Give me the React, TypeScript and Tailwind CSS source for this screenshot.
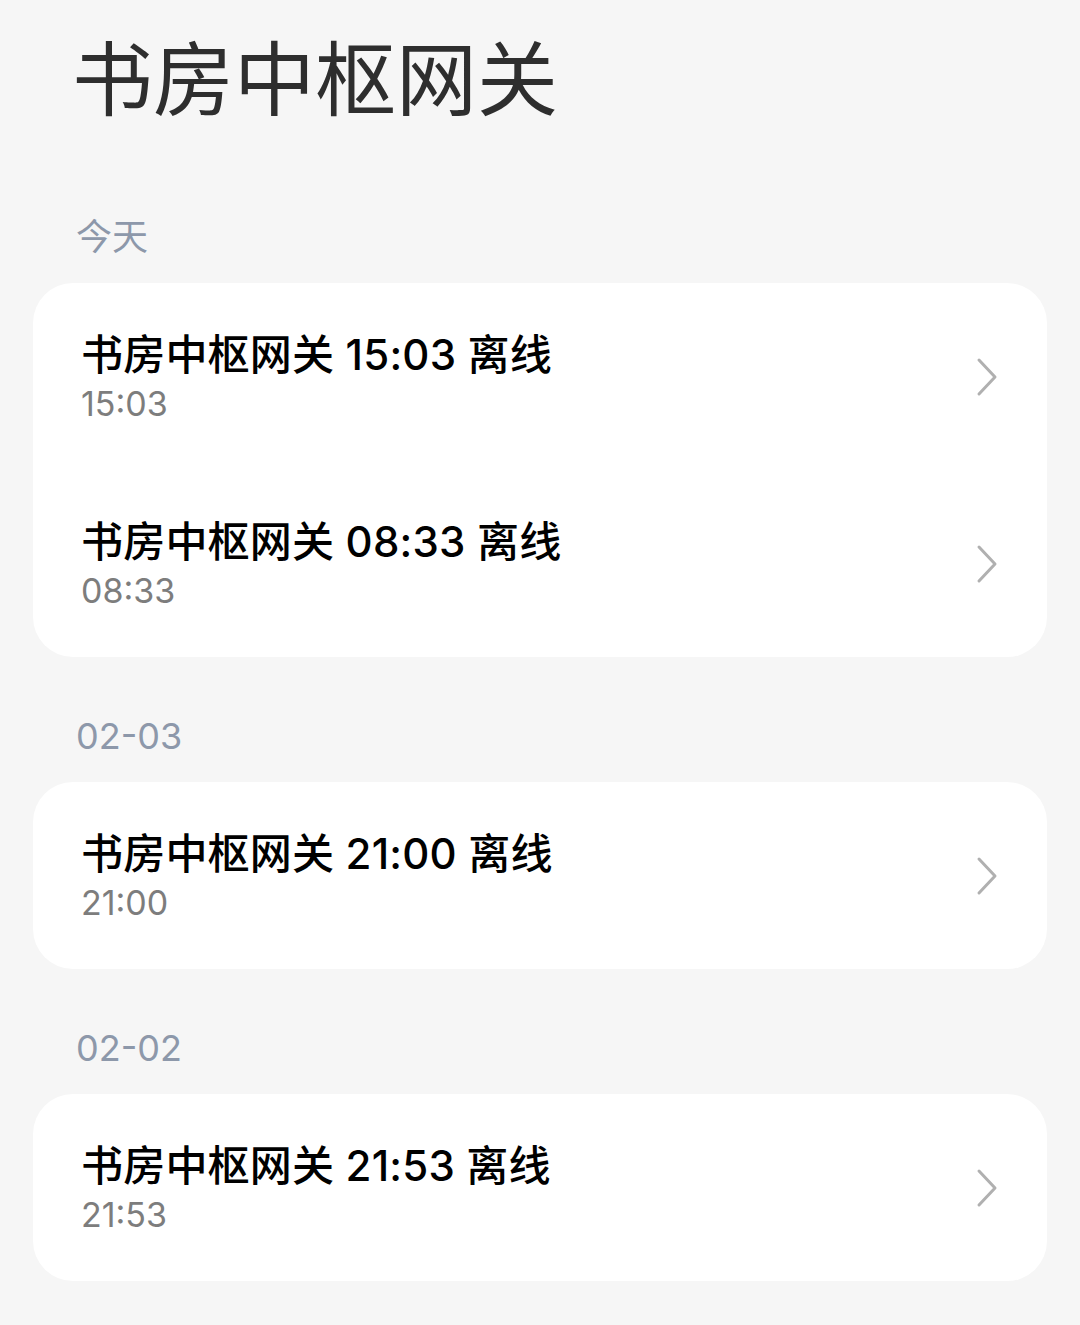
const FONT = "font-['Inter','Noto_Sans_CJK_SC',sans-serif]";

type Entry = { title: string; time: string };

const SECTIONS: { label: string; items: Entry[] }[] = [
  {
    label: "今天",
    items: [
      { title: "书房中枢网关 15:03 离线", time: "15:03" },
      { title: "书房中枢网关 08:33 离线", time: "08:33" },
    ],
  },
  { label: "02-03", items: [{ title: "书房中枢网关 21:00 离线", time: "21:00" }] },
  { label: "02-02", items: [{ title: "书房中枢网关 21:53 离线", time: "21:53" }] },
];

function Chevron() {
  return (
    <svg width="24" height="40" viewBox="0 0 24 40" fill="none" className="shrink-0">
      <polyline
        points="4,3 20,20 4,37"
        stroke="#b0b0b0"
        strokeWidth="3"
        strokeLinecap="round"
        strokeLinejoin="round"
      />
    </svg>
  );
}

function Row({ entry }: { entry: Entry }) {
  return (
    <div className="flex h-[187px] items-center justify-between pl-[48px] pr-[48px]">
      <div className="flex flex-col pt-[2px]">
        <span className="text-[42px] leading-[50px] font-medium tracking-[0.2px] text-black">{entry.title}</span>
        <span className="mt-[2px] text-[34px] leading-[44px] text-[#7d7d7d]">{entry.time}</span>
      </div>
      <Chevron />
    </div>
  );
}

export default function App() {
  return (
    <div className={`${FONT} min-h-[1325px] w-[1080px] bg-[#f6f6f6] px-[33px] pt-[32px]`}>
      <h1 className="pl-[39px] text-[81px] leading-[96px] font-normal text-[#2e2e2e]">书房中枢网关</h1>

      <div className="mt-[30px] flex flex-col">
        {SECTIONS.map((s) => (
          <section key={s.label} className="pt-[55px]">
            <div className="mb-[22px] pl-[43px] text-[36px] leading-[48px] text-[#8d98aa]">{s.label}</div>
            <div className="rounded-[40px] bg-white">
              {s.items.map((e) => (
                <Row key={e.title} entry={e} />
              ))}
            </div>
          </section>
        ))}
      </div>
    </div>
  );
}
